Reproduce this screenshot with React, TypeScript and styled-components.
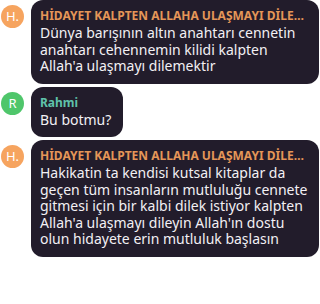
import styled, { createGlobalStyle } from "styled-components";

const GlobalStyle = createGlobalStyle`
  body {
    margin: 0;
    background: #ffffff;
    font-family: "Noto Sans", "Open Sans", sans-serif;
  }
`;

const List = styled.div`
  display: flex;
  flex-direction: column;
  gap: 3px;
  width: 320px;
  padding-right: 1px;
  box-sizing: border-box;
`;

const Row = styled.div`
  display: flex;
  align-items: flex-start;
  gap: 7px;
  padding-left: 1px;
`;

const Avatar = styled.div<{ $color: string }>`
  flex: none;
  width: 23px;
  height: 23px;
  margin-top: 5px;
  border-radius: 50%;
  background: ${(p) => p.$color};
  color: #ffffff;
  font-size: 13px;
  line-height: 23px;
  text-align: center;
`;

const Bubble = styled.div`
  min-width: 74px;
  max-width: 270px;
  background: #221c2b;
  border-radius: 12px;
  padding: 7px 9px 9px 9px;
`;

const Name = styled.div<{ $color: string }>`
  color: ${(p) => p.$color};
  font-weight: 700;
  font-size: 12px;
  line-height: 18px;
  white-space: nowrap;
  overflow: hidden;
  text-overflow: ellipsis;
`;

const Text = styled.div`
  color: #f2f0f4;
  font-size: 14px;
  line-height: 16.5px;
`;

interface Message {
  initial: string;
  avatarColor: string;
  name: string;
  nameColor: string;
  text: string;
}

const messages: Message[] = [
  {
    initial: "H.",
    avatarColor: "#f6a45f",
    name: "HİDAYET KALPTEN ALLAHA ULAŞMAYI DİLEYİN",
    nameColor: "#e59658",
    text: "Dünya barışının altın anahtarı cennetin anahtarı cehennemin kilidi kalpten Allah'a ulaşmayı dilemektir",
  },
  {
    initial: "R",
    avatarColor: "#4fc66b",
    name: "Rahmi",
    nameColor: "#5fc2aa",
    text: "Bu botmu?",
  },
  {
    initial: "H.",
    avatarColor: "#f6a45f",
    name: "HİDAYET KALPTEN ALLAHA ULAŞMAYI DİLEYİN",
    nameColor: "#e59658",
    text: "Hakikatin ta kendisi kutsal kitaplar da geçen tüm insanların mutluluğu cennete gitmesi için bir kalbi dilek istiyor kalpten Allah'a ulaşmayı dileyin Allah'ın dostu olun hidayete erin mutluluk başlasın",
  },
];

export default function App() {
  return (
    <>
      <GlobalStyle />
      <List>
        {messages.map((m, i) => (
          <Row key={i}>
            <Avatar $color={m.avatarColor}>{m.initial}</Avatar>
            <Bubble>
              <Name $color={m.nameColor}>{m.name}</Name>
              <Text>{m.text}</Text>
            </Bubble>
          </Row>
        ))}
      </List>
    </>
  );
}
